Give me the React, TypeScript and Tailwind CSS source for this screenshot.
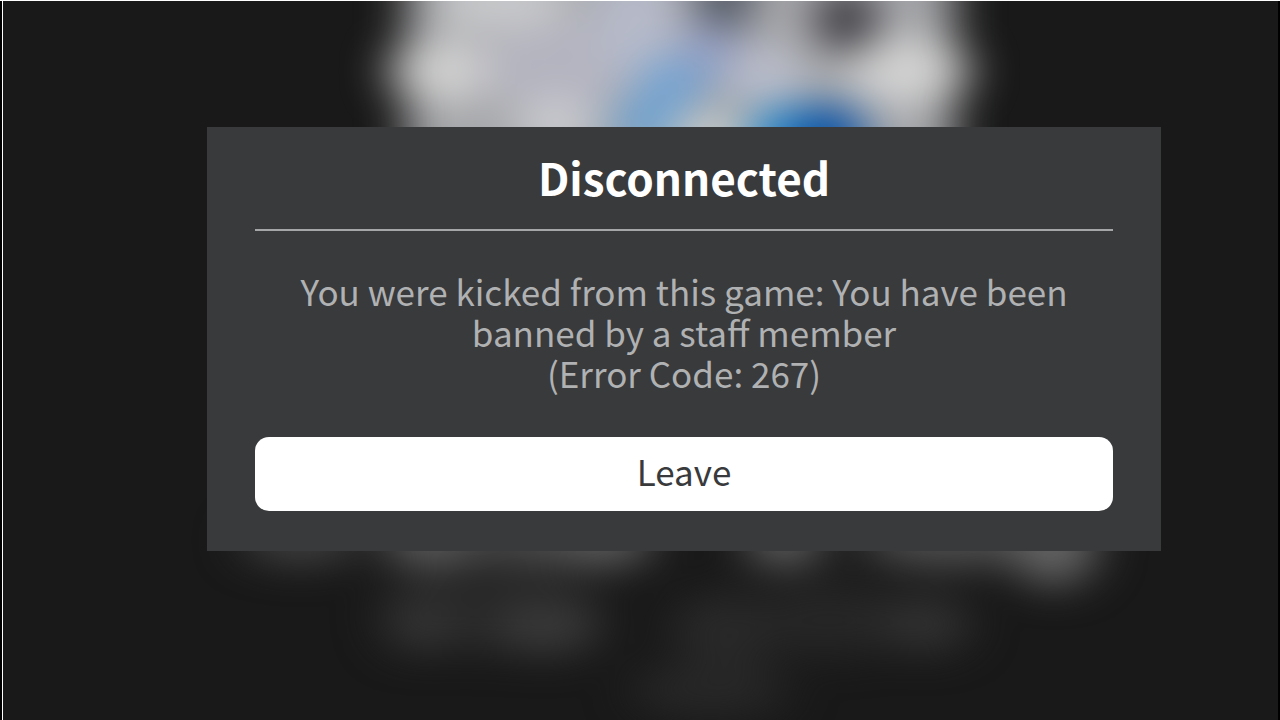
import React from 'react';

type Blob = {
	cx: number;
	cy: number;
	rx: number;
	ry: number;
	fill: string;
};

const artBlobs: Blob[] = [
	{ cx: 442, cy: 70, rx: 54, ry: 32, fill: '#d0d0d0' },
	{ cx: 500, cy: 0, rx: 70, ry: 30, fill: '#c8c9cb' },
	{ cx: 560, cy: 66, rx: 76, ry: 44, fill: '#b4b4c0' },
	{ cx: 555, cy: 124, rx: 42, ry: 26, fill: '#cbccd0' },
	{ cx: 636, cy: 20, rx: 44, ry: 56, fill: '#b6bac9' },
	{ cx: 724, cy: -6, rx: 28, ry: 38, fill: '#4a505c' },
	{ cx: 708, cy: 50, rx: 28, ry: 28, fill: '#929dc4' },
	{ cx: 672, cy: 84, rx: 36, ry: 28, fill: '#74a3d2' },
	{ cx: 644, cy: 124, rx: 32, ry: 28, fill: '#6ca1d0' },
	{ cx: 708, cy: 138, rx: 36, ry: 22, fill: '#d2d2cc' },
	{ cx: 784, cy: 20, rx: 24, ry: 30, fill: '#a8a8ac' },
	{ cx: 766, cy: 74, rx: 38, ry: 28, fill: '#bcbfcd' },
	{ cx: 846, cy: 18, rx: 30, ry: 34, fill: '#37363c' },
	{ cx: 908, cy: 70, rx: 62, ry: 34, fill: '#d2d2d2' },
	{ cx: 784, cy: 138, rx: 36, ry: 34, fill: '#2a8dce' },
	{ cx: 828, cy: 138, rx: 38, ry: 36, fill: '#0850a4' },
];

const captionBlobs: Blob[] = [
	{ cx: 300, cy: 540, rx: 60, ry: 22, fill: '#444444' },
	{ cx: 430, cy: 540, rx: 50, ry: 26, fill: '#5e5e5e' },
	{ cx: 530, cy: 540, rx: 60, ry: 24, fill: '#4c4c4c' },
	{ cx: 602, cy: 540, rx: 52, ry: 26, fill: '#606060' },
	{ cx: 784, cy: 540, rx: 40, ry: 26, fill: '#626262' },
	{ cx: 950, cy: 540, rx: 90, ry: 26, fill: '#525252' },
	{ cx: 1054, cy: 544, rx: 44, ry: 42, fill: '#646464' },
	{ cx: 490, cy: 605, rx: 110, ry: 46, fill: '#262626' },
	{ cx: 422, cy: 626, rx: 40, ry: 26, fill: '#343434' },
	{ cx: 545, cy: 628, rx: 56, ry: 26, fill: '#3a3a3a' },
	{ cx: 730, cy: 628, rx: 60, ry: 36, fill: '#292929' },
	{ cx: 830, cy: 620, rx: 80, ry: 36, fill: '#262626' },
	{ cx: 926, cy: 624, rx: 44, ry: 28, fill: '#323232' },
	{ cx: 710, cy: 690, rx: 80, ry: 28, fill: '#272727' },
];

function Blobs({ items }: { items: Blob[] }) {
	return (
		<>
			{items.map((blob) => (
				<ellipse key={`${blob.cx}-${blob.cy}`} {...blob} />
			))}
		</>
	);
}

function Backdrop() {
	return (
		<svg
			className="absolute inset-0 h-full w-full"
			viewBox="0 0 1280 720"
			preserveAspectRatio="xMidYMid slice"
			aria-hidden="true"
		>
			<defs>
				<filter
					id="soft"
					filterUnits="userSpaceOnUse"
					x="0"
					y="-100"
					width="1280"
					height="920"
					colorInterpolationFilters="sRGB"
				>
					<feGaussianBlur stdDeviation="23 19" />
				</filter>
			</defs>
			<g filter="url(#soft)">
				<rect x="406" y="-80" width="548" height="300" fill="#a6a7aa" />
				<Blobs items={artBlobs} />
			</g>
			<g filter="url(#soft)">
				<Blobs items={captionBlobs} />
			</g>
		</svg>
	);
}

function DisconnectedDialog() {
	return (
		<section
			role="dialog"
			aria-labelledby="dialog-title"
			aria-describedby="dialog-message"
			className="relative w-full max-w-[954px] bg-[#393a3c] px-12 pb-10 text-center"
		>
			<h1
				id="dialog-title"
				className="border-b-2 border-[#a5a6a8] pt-5 pb-[22px] text-[44px] leading-[60px] font-bold text-white"
			>
				Disconnected
			</h1>
			<p
				id="dialog-message"
				className="pt-[39px] pb-11 text-[35px] leading-[41px] text-[#b0b1b2]"
			>
				You were kicked from this game: You have been banned by a staff
				member
				<br />
				(Error Code: 267)
			</p>
			<button
				type="button"
				className="h-[74px] w-full rounded-[14px] bg-white pb-1.5 text-[35px] text-[#393a3c]"
			>
				Leave
			</button>
		</section>
	);
}

export default function App() {
	return (
		<div className="flex min-h-screen overflow-hidden border-t border-white bg-black px-0.5 font-['Noto_Sans_CJK_SC',sans-serif]">
			<main className="relative flex flex-1 items-center justify-center border-l border-white bg-[#191919] pb-[43px] pl-[87px]">
				<Backdrop />
				<DisconnectedDialog />
			</main>
		</div>
	);
}
